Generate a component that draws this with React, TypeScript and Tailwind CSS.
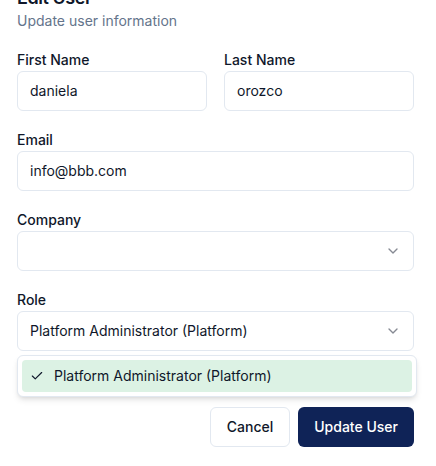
import React from "react";

function Chevron() {
  return (
    <svg width="16" height="16" viewBox="0 0 24 24" fill="none" stroke="currentColor" strokeWidth="2" strokeLinecap="round" strokeLinejoin="round" className="opacity-50 text-[#0f172a]">
      <path d="m6 9 6 6 6-6" />
    </svg>
  );
}

function Check() {
  return (
    <svg width="14" height="14" viewBox="0 0 24 24" fill="none" stroke="currentColor" strokeWidth="2" strokeLinecap="round" strokeLinejoin="round">
      <path d="M20 6 9 17l-5-5" />
    </svg>
  );
}

function Field({ label, children }: { label: string; children: React.ReactNode }) {
  return (
    <div className="flex flex-col">
      <label className="block text-sm font-medium leading-none text-[#0f172a]">{label}</label>
      <div className="mt-1">{children}</div>
    </div>
  );
}

function Input({ value }: { value: string }) {
  return (
    <div className="flex h-10 w-full items-center rounded-md border border-[#e2e8f0] bg-white px-3 text-sm text-[#0f172a]">
      {value}
    </div>
  );
}

function SelectBox({ value }: { value?: string }) {
  return (
    <div className="flex h-10 w-full items-center justify-between rounded-md border border-[#e2e8f0] bg-white px-3 text-sm text-[#0f172a]">
      <span>{value ?? ""}</span>
      <Chevron />
    </div>
  );
}

export default function App() {
  return (
    <div className="min-h-[466px] w-[436px] bg-white font-['Inter',sans-serif] overflow-hidden">
      <div className="-mt-[11px] pl-[17px] pr-[22px]">
        <h2 className="text-lg font-semibold leading-none tracking-tight text-[#0f172a]">Edit User</h2>
        <p className="mt-1 text-sm leading-5 text-[#64748b]">Update user information</p>

        <div className="mt-[22px] grid grid-cols-2 gap-[17px]">
          <Field label="First Name">
            <Input value="daniela" />
          </Field>
          <Field label="Last Name">
            <Input value="orozco" />
          </Field>
        </div>

        <div className="mt-[22px]">
          <Field label="Email">
            <Input value="info@bbb.com" />
          </Field>
        </div>

        <div className="mt-[22px]">
          <Field label="Company">
            <SelectBox />
          </Field>
        </div>

        <div className="mt-[22px]">
          <Field label="Role">
            <div className="relative">
              <SelectBox value="Platform Administrator (Platform)" />
              <div className="absolute left-0 top-full z-10 mt-1 w-[400px] rounded-md border border-[#e2e8f0] bg-white p-1 shadow-md">
                <div className="relative flex h-8 items-center rounded-sm bg-[#dcf2e4] pl-8 pr-2 text-sm text-[#0f172a]">
                  <span className="absolute left-2 flex h-3.5 w-3.5 items-center justify-center">
                    <Check />
                  </span>
                  Platform Administrator (Platform)
                </div>
              </div>
            </div>
          </Field>
        </div>

        <div className="mt-14 flex justify-end gap-2">
          <button className="h-10 rounded-md border border-[#e2e8f0] bg-white px-4 text-sm font-medium text-[#0f172a]">
            Cancel
          </button>
          <button className="h-10 rounded-md bg-[#0f2357] px-4 text-sm font-medium text-white">
            Update User
          </button>
        </div>
      </div>
    </div>
  );
}
